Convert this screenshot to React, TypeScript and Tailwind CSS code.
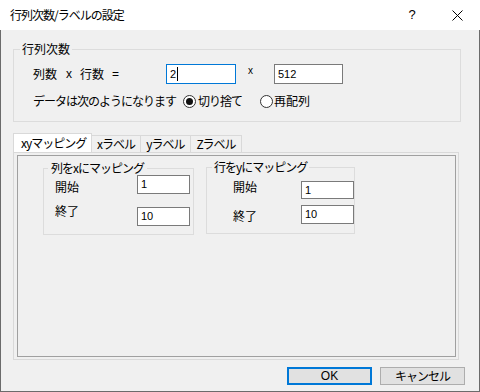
import React from "react";

function Radio({ checked }: { checked: boolean }) {
  return (
    <span className="w-[13px] h-[13px] shrink-0 rounded-full border border-[#333333] bg-white flex items-center justify-center">
      {checked && <span className="w-[7px] h-[7px] rounded-full bg-[#111111]" />}
    </span>
  );
}

function Field({ value, cls }: { value: string; cls: string }) {
  return (
    <div className={"shrink-0 bg-white border border-[#7a7a7a] flex items-center pl-[3px] font-['Liberation_Sans',sans-serif] text-[11px] " + cls}>
      {value}
    </div>
  );
}

export default function App() {
  return (
    <div className="w-[480px] h-[392px] flex flex-col bg-white font-['Noto_Sans_CJK_JP','Noto_Sans',sans-serif] text-[12px] text-black select-none overflow-hidden">
      {/* title bar */}
      <div className="h-[30px] shrink-0 flex items-center bg-white">
        <span className="ml-[10px] tracking-[-1px] leading-[16px]">行列次数/ラベルの設定</span>
        <span className="ml-auto w-[44px] text-center leading-[16px] font-['Liberation_Sans',sans-serif] text-[13px]">?</span>
        <span className="w-[46px] flex items-center justify-center">
          <svg width="11" height="11" viewBox="0 0 11 11">
            <path d="M0.5 0.5 L10.5 10.5 M10.5 0.5 L0.5 10.5" stroke="#000" strokeWidth="1" />
          </svg>
        </span>
      </div>

      {/* body */}
      <div className="flex-1 flex flex-col bg-[#f0f0f0] border-x border-b border-[#6b6b6b]">
        <fieldset className="ml-[12px] mt-[11px] w-[448px] h-[81px] shrink-0 border border-[#dcdcdc] min-w-0">
          <legend className="ml-[6px] px-[2px] leading-[16px]">行列次数</legend>
          <div className="flex items-center h-[20px] mt-[7px] pl-[19px]">
            <span className="w-[33px] shrink-0">列数</span>
            <span className="w-[14px] shrink-0 font-['Liberation_Sans',sans-serif]">x</span>
            <span className="w-[32px] shrink-0">行数</span>
            <span className="w-[54px] shrink-0 font-['Liberation_Sans',sans-serif]">=</span>
            <div className="w-[70px] h-[20px] shrink-0 bg-white border border-[#0078d7] flex items-center pl-[3px] font-['Liberation_Sans',sans-serif] text-[11px]">
              2<span className="ml-[1px] w-[1px] h-[14px] bg-black" />
            </div>
            <span className="w-[38px] shrink-0 pl-[12px] self-start pt-[1px] text-[10px] leading-[12px] font-['Liberation_Sans',sans-serif]">x</span>
            <Field value="512" cls="w-[69px] h-[20px]" />
          </div>
          <div className="flex items-center h-[20px] mt-[7px] pl-[19px]">
            <span className="w-[150px] shrink-0 tracking-[-1px]">データは次のようになります</span>
            <Radio checked />
            <span className="w-[64px] shrink-0 pl-[2px] tracking-[-1px]">切り捨て</span>
            <Radio checked={false} />
            <span className="pl-[1px]">再配列</span>
          </div>
        </fieldset>

        {/* tabs */}
        <div className="ml-[12px] mt-[11px] h-[19px] shrink-0 flex items-end">
          <div className="w-[79px] h-[19px] bg-white border-t border-x border-[#d9d9d9] pl-[7px] tracking-[-1px] leading-[17px]">xyマッピング</div>
          <div className="w-[49px] h-[17px] border-t border-r border-[#d9d9d9] text-center tracking-[-1px] leading-[16px]">xラベル</div>
          <div className="w-[50px] h-[17px] border-t border-r border-[#d9d9d9] text-center tracking-[-1px] leading-[16px]">yラベル</div>
          <div className="w-[51px] h-[17px] border-t border-r border-[#d9d9d9] text-center tracking-[-1px] leading-[16px]">Zラベル</div>
        </div>
        <div className="ml-[12px] w-[446px] h-[208px] shrink-0 border border-[#d9d9d9] pt-[2px] pl-[3px] pr-[2px] pb-[2px]">
          <div className="h-full border border-[#a0a0a0] flex items-start">
            {/* left group */}
            <fieldset className="ml-[25px] mt-[5px] w-[151px] h-[74px] shrink-0 border border-[#dcdcdc] min-w-0">
              <legend className="ml-[4px] px-[3px] leading-[14px] tracking-[-1px]">列をxにマッピング</legend>
              <div className="flex items-start">
                <span className="ml-[11px] w-[82px] shrink-0 mt-[4px] leading-[16px]">開始</span>
                <Field value="1" cls="h-[19px] w-[53px]" />
              </div>
              <div className="flex items-start">
                <span className="ml-[11px] w-[82px] shrink-0 mt-[8px] leading-[16px]">終了</span>
                <Field value="10" cls="h-[19px] w-[53px] mt-[12px]" />
              </div>
            </fieldset>
            {/* right group */}
            <fieldset className="ml-[12px] mt-[4px] w-[149px] h-[74px] shrink-0 border border-[#dcdcdc] min-w-0">
              <legend className="ml-[5px] px-[2px] leading-[14px] tracking-[-1px]">行をyにマッピング</legend>
              <div className="flex items-start">
                <span className="ml-[26px] w-[68px] shrink-0 mt-[5px] leading-[16px]">開始</span>
                <Field value="1" cls="h-[18px] w-[53px] mt-[7px]" />
              </div>
              <div className="flex items-start">
                <span className="ml-[26px] w-[68px] shrink-0 mt-[9px] leading-[16px]">終了</span>
                <Field value="10" cls="h-[19px] w-[53px] mt-[6px]" />
              </div>
            </fieldset>
          </div>
        </div>

        {/* buttons */}
        <div className="mt-[7px] flex justify-end gap-[8px] pr-[14px]">
          <div className="w-[85px] h-[18px] border-2 border-[#0078d7] bg-[#e1e1e1] flex items-center justify-center leading-none font-['Liberation_Sans',sans-serif] text-[12px]">OK</div>
          <div className="w-[85px] h-[18px] border border-[#adadad] bg-[#e1e1e1] flex items-center justify-center leading-none tracking-[-1px]">キャンセル</div>
        </div>
      </div>
    </div>
  );
}
